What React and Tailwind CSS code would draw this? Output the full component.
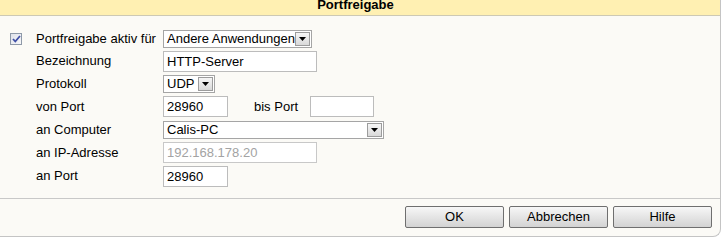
import React from 'react';

function Arrow() {
  return (
    <div className="w-[15px] h-full border border-[#9c9c9c] bg-gradient-to-b from-[#f6f6f6] to-[#d9d9d9] flex items-center justify-center shrink-0">
      <svg width="7" height="4" viewBox="0 0 7 4">
        <path d="M0 0h7L3.5 4z" fill="#000" />
      </svg>
    </div>
  );
}

function Select({ className, value }) {
  return (
    <div className={`h-[18px] border border-[#a5a5a5] bg-white flex items-stretch p-px ${className}`}>
      <span className="flex-1 pl-[2px] leading-[14px] whitespace-nowrap overflow-hidden">{value}</span>
      <Arrow />
    </div>
  );
}

function Input({ className, value = '', disabled = false }) {
  return (
    <div
      className={`h-[21px] border bg-white pl-[3px] leading-[19px] whitespace-nowrap ${disabled ? 'text-[#a3a3a3] border-[#c8c8c8]' : 'text-black border-[#bcbcbc]'} ${className}`}
    >
      {value}
    </div>
  );
}

function Row({ className, label, children }) {
  return (
    <div className={`flex items-center ${className}`}>
      <span className="w-[127px] pl-[36px] box-content shrink-0">{label}</span>
      {children}
    </div>
  );
}

function Button({ children }) {
  return (
    <button className="w-[99px] h-[22px] border border-[#6f6f6f] rounded-[2px] bg-gradient-to-b from-[#f7f7f7] to-[#d3d3d3] text-[13px] leading-[20px] text-black">
      {children}
    </button>
  );
}

export default function App() {
  return (
    <div className="w-[722px] h-[240px] bg-white text-[13px] text-black font-['Liberation_Sans',Arial,sans-serif]">
      <div className="w-[721px] h-[237px] bg-[#fbfaf6] border-r border-b border-[#c4c4c4] rounded-br-[8px] flex flex-col overflow-hidden">
        <div className="h-[16px] shrink-0 bg-[#fff0b2] border-b border-[#cdc9b4] flex justify-center pr-[9px] overflow-hidden">
          <span className="font-bold leading-[9px]">Portfreigabe</span>
        </div>

        <div className="pt-[12px] flex flex-col">
          <div className="h-[22px] flex items-center">
            <div className="w-[36px] pl-[10px] shrink-0 flex">
              <div className="w-[12px] h-[12px] border border-[#8e99a8] bg-gradient-to-br from-[#dfe2ea] to-[#f7f7f9] flex items-center justify-center">
                <svg width="9" height="8" viewBox="0 0 9 8">
                  <path d="M1 4l2.3 2.5L8 1" fill="none" stroke="#3f4fa6" strokeWidth="1.8" />
                </svg>
              </div>
            </div>
            <span className="w-[127px] shrink-0">Portfreigabe aktiv für</span>
            <Select className="w-[149px]" value="Andere Anwendungen" />
          </div>
          <Row className="h-[22px]" label="Bezeichnung">
            <Input className="w-[154px]" value="HTTP-Server" />
          </Row>
          <Row className="h-[23px]" label="Protokoll">
            <Select className="w-[52px]" value="UDP" />
          </Row>
          <Row className="h-[23px]" label="von Port">
            <Input className="w-[65px]" value="28960" />
            <span className="w-[56px] pl-[26px] box-content shrink-0 whitespace-nowrap">bis Port</span>
            <Input className="w-[64px]" />
          </Row>
          <Row className="h-[23px]" label="an Computer">
            <Select className="w-[221px]" value="Calis-PC" />
          </Row>
          <Row className="h-[23px]" label="an IP-Adresse">
            <Input className="w-[154px]" value="192.168.178.20" disabled />
          </Row>
          <Row className="h-[24px]" label="an Port">
            <Input className="w-[65px]" value="28960" />
          </Row>
        </div>

        <div className="mt-[10px] border-t border-[#c8c8c8] pt-[7px] pr-[8px] flex justify-end gap-[5px]">
          <Button>OK</Button>
          <Button>Abbrechen</Button>
          <Button>Hilfe</Button>
        </div>
      </div>
    </div>
  );
}
